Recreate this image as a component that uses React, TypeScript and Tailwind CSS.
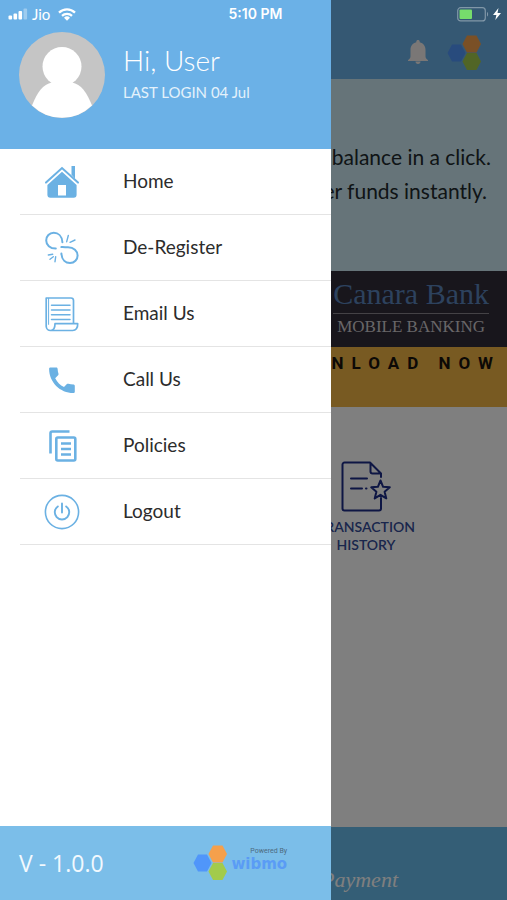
import type { ReactNode } from "react";

const MENU: { label: string; icon: ReactNode }[] = [
  { label: "Home", icon: <HomeIcon /> },
  { label: "De-Register", icon: <UnlinkIcon /> },
  { label: "Email Us", icon: <ScrollIcon /> },
  { label: "Call Us", icon: <PhoneIcon /> },
  { label: "Policies", icon: <PoliciesIcon /> },
  { label: "Logout", icon: <PowerIcon /> },
];

function HomeIcon() {
  return (
    <svg viewBox="0 0 36 36" className="size-9" fill="currentColor" aria-hidden>
      <path d="M27.500 2h3.500v12.700l-3.500-4V2z" />
      <path
        d="M2 18.600 18 4l16 14.600"
        fill="none"
        stroke="currentColor"
        strokeWidth="2"
        strokeLinecap="round"
      />
      <path
        fillRule="evenodd"
        d="M18 7.800 32.600 21v9.800a3 3 0 0 1-3 3H6.400a3 3 0 0 1-3-3V21L18 7.800zM14 21v10.500h8V21h-8z"
      />
    </svg>
  );
}

function UnlinkIcon() {
  return (
    <svg
      viewBox="0 0 36 36"
      className="size-9"
      fill="none"
      stroke="currentColor"
      strokeWidth="2"
      strokeLinecap="round"
      aria-hidden
    >
      <path d="M18.400 12.200C18 5.800 14 2.800 9.800 2.800 5.400 2.800 2.200 6.200 2.200 10.400c0 4.400 3.800 8.200 9.600 8.200" />
      <path d="M17.400 23.600C17.800 30 21.800 33 26 33c4.400 0 7.600-3.400 7.600-7.600 0-4.400-3.800-8.200-9.600-8.200-2.400 0-4.600-.2-6.600-.1" />
      <path
        d="M22.700 11.700l1.600-6.200M26 12.300l5-2.300M4.300 25l4.400-.7M6 29.300l3.300-2.600M11.700 26.700l-.7 5"
        strokeWidth="1.400"
      />
    </svg>
  );
}

function ScrollIcon() {
  return (
    <svg
      viewBox="0 0 36 36"
      className="size-9"
      fill="none"
      stroke="currentColor"
      strokeWidth="1.700"
      strokeLinejoin="round"
      strokeLinecap="round"
      aria-hidden
    >
      <path d="M29.500 27.700V4.500a2.500 2.500 0 0 0-2.500-2.500H2.200v28.500a4.300 4.300 0 0 0 4.300 4h22.200c3 0 5.200-2.600 5-6.800H11c0 3.800-1.400 6.800-4.500 6.800" />
      <path d="M4.600 2.400v26" strokeWidth="1" />
      <path d="M7.500 9.300h18.500M7.500 14h18.500M7.500 18.700h18.500M7.500 23.400h18.500" strokeWidth="1.500" />
    </svg>
  );
}

function PhoneIcon() {
  return (
    <svg viewBox="0 0 36 36" className="size-9" fill="currentColor" aria-hidden>
      <path d="M6.400 5.400h5.800c.8 0 1.300.5 1.400 1.300.1 1.900.4 3.500.9 5.100.2.600 0 1.100-.4 1.500l-2.900 2.900c2.100 4 4.800 6.800 8.800 8.800l2.900-2.900c.4-.4.900-.5 1.500-.4 1.600.5 3.200.8 5 .9.800 0 1.400.6 1.400 1.400v5.700c0 .8-.6 1.400-1.400 1.400C16 31.100 5.100 20.200 5.100 6.800c0-.8.5-1.400 1.300-1.400z" />
    </svg>
  );
}

function PoliciesIcon() {
  return (
    <svg
      viewBox="0 0 36 36"
      className="size-9"
      fill="none"
      stroke="currentColor"
      strokeWidth="2.600"
      aria-hidden
    >
      <path d="M6.500 25.500V5.300A1.800 1.800 0 0 1 8.300 3.500H25.500" />
      <rect x="12.300" y="9.500" width="19" height="23" rx="1.500" />
      <path d="M17 15.500h10M17 21h10M17 26.500h10" strokeWidth="2.400" />
    </svg>
  );
}

function PowerIcon() {
  return (
    <svg
      viewBox="0 0 36 36"
      className="size-9"
      fill="none"
      stroke="currentColor"
      strokeWidth="1.600"
      strokeLinecap="round"
      aria-hidden
    >
      <circle cx="18" cy="18" r="16.600" />
      <path d="M18 9.500v9M13.800 12.400a7.200 7.200 0 1 0 8.400 0" strokeWidth="1.900" />
    </svg>
  );
}

function HexLogo({ className }: { className: string }) {
  return (
    <svg viewBox="0 0 34 36" className={className} aria-hidden>
      <path d="M5 9.500h9l4.500 8.500-4.500 8.500H5L.5 18z" fill="#5096fa" />
      <path d="M20 .5h9.500L34 9l-4.500 8.500H20L15.500 9z" fill="#f5a04c" />
      <path d="M20 18h9.500l4.500 8.500-4.500 8.500H20l-4.500-8.500z" fill="#a2cb4c" />
    </svg>
  );
}

function StatusBar() {
  return (
    <div className="absolute inset-x-0 top-0 z-30 grid h-7 grid-cols-3 items-center px-2 text-white">
      <div className="flex items-center gap-1">
        <svg viewBox="0 0 19 12" className="h-3 w-5" fill="currentColor" aria-hidden>
          <rect x="0" y="7.500" width="3.600" height="4" rx="1" />
          <rect x="5" y="5.500" width="3.600" height="6" rx="1" />
          <rect x="10" y="3" width="3.600" height="8.500" rx="1" />
          <rect x="15" y="0.500" width="3.600" height="11" rx="1" opacity=".35" />
        </svg>
        <span className="text-[15px] leading-5">Jio</span>
        <svg
          viewBox="0 0 18 13"
          className="ml-1 h-[13px] w-[18px]"
          fill="none"
          stroke="currentColor"
          strokeWidth="2.300"
          aria-hidden
        >
          <path d="M1 4.600a11.600 11.600 0 0 1 16 0M4 7.900a7.300 7.300 0 0 1 10 0" />
          <path d="M9 12.800 6 9.700a4.400 4.400 0 0 1 6 0z" fill="currentColor" stroke="none" />
        </svg>
      </div>
      <div className="pl-1 text-center font-[Inter] text-[14px] leading-5 font-semibold">5:10 PM</div>
      <div className="flex items-center justify-end gap-1">
        <svg viewBox="0 0 32 15" className="h-[15px] w-8" aria-hidden>
          <rect
            x=".700"
            y=".700"
            width="27.600"
            height="13.200"
            rx="3"
            fill="none"
            stroke="#8197a8"
            strokeWidth="1.200"
          />
          <rect x="2.500" y="2.500" width="12.500" height="9.600" rx="1" fill="#76dc6c" />
          <path d="M30 5v4.600c1.500-.6 1.500-4 0-4.600z" fill="#8197a8" />
        </svg>
        <svg viewBox="0 0 8 12" className="-mr-0.5 h-3 w-2" fill="currentColor" aria-hidden>
          <path d="M5.500 0 0 7h3.400L2.300 12 8 5H4.500z" />
        </svg>
      </div>
    </div>
  );
}

function Dashboard() {
  return (
    <main className="flex min-h-screen flex-col overflow-hidden bg-white">
      <header className="flex h-[79px] items-end justify-end gap-[18px] bg-[#6bb1e7] pr-[26px] pb-2">
        <button type="button" aria-label="Notifications" className="pb-1.5 text-[#f5efec]">
          <svg viewBox="0 0 22 26" className="h-[26px] w-[22px]" fill="currentColor" aria-hidden>
            <path d="M11 1c1 0 1.700.7 1.700 1.700v.6c3.600.8 5.800 3.800 5.800 7.700v6.500c0 1.500 1 2.500 2.500 3.700V22H1v-.8c1.500-1.200 2.500-2.200 2.500-3.700V11c0-3.900 2.200-6.900 5.800-7.700v-.6C9.300 1.700 10 1 11 1zM8.500 22.500h5c0 1.500-1 2.500-2.500 2.500s-2.500-1-2.500-2.500z" />
          </svg>
        </button>
        <HexLogo className="h-9 w-[34px]" />
      </header>

      <section className="flex h-48 flex-col items-end bg-[#cce8f2] pt-[61px] pr-4 text-[21px] leading-[34px] whitespace-nowrap text-[#20282c]">
        <p>balance in a click.</p>
        <p className="pr-1">Transfer funds instantly.</p>
      </section>

      <section className="flex h-[76px] flex-col items-end bg-[#302c38] pt-1 pr-[18px] font-['Liberation_Serif',serif] whitespace-nowrap">
        <p className="border-b border-[#88848c] text-[30px] leading-[38px] text-[#5a84bc]">
          Canara Bank
        </p>
        <p className="pr-1 text-[17px] leading-[26px] text-[#d0ccd0]">MOBILE BANKING</p>
      </section>
      <section className="flex h-[60px] justify-end bg-[#f0b444] pt-1 pr-1.5 font-['Roboto',sans-serif] text-[17px] leading-6 font-bold tracking-[8px] whitespace-nowrap text-[#18120c]">
        <p>DOWNLOAD NOW</p>
      </section>

      <section className="flex grow items-start justify-end pt-[54px] pr-[92px]">
        <a
          href="#history"
          className="flex flex-col items-center text-center text-[14px] leading-[18px] font-semibold text-[#344c98]"
        >
          <svg
            viewBox="0 0 52 52"
            className="mb-[5px] size-[52px]"
            fill="none"
            stroke="#1c2c88"
            strokeWidth="2"
            strokeLinejoin="round"
            strokeLinecap="round"
            aria-hidden
          >
            <path d="M41 37v10.500a2 2 0 0 1-2 2H4.500a2 2 0 0 1-2-2v-44a2 2 0 0 1 2-2H30l11 11V16M30.500 2v8.500a2 2 0 0 0 2 2H41M11 17.500h16M11 27.500h11M26 27.500h.5" />
            <path d="m40.500 19.500 2.600 6.300 6.700.5-5.200 4.400 1.700 6.700-5.800-3.600-5.800 3.600 1.700-6.700-5.200-4.400 6.700-.5z" />
          </svg>
          <span>TRANSACTION</span>
          <span>HISTORY</span>
        </a>
      </section>

      <footer className="flex h-[73px] items-end justify-end bg-[#68bcec] pr-[109px] pb-1 font-['Liberation_Serif',serif] text-[22px] leading-8 text-white italic">
        Payment
      </footer>
    </main>
  );
}

function Drawer() {
  return (
    <aside className="absolute inset-y-0 left-0 z-20 flex w-[65.3%] flex-col bg-white">
      <div className="flex h-[149px] items-start gap-[18px] bg-[#6bb1e7] pt-8 pl-[19px] text-white">
        <svg
          viewBox="0 0 86 86"
          className="size-[86px] shrink-0"
          role="img"
          aria-label="Profile picture"
        >
          <circle cx="43" cy="43" r="43" fill="#c5c5c5" />
          <circle cx="43" cy="34.500" r="19.500" fill="#fff" />
          <path
            d="M13 73.600C18 60.500 24 52 33 50.500h20C62 52 68 60.500 73 73.600a43 43 0 0 1-60 0z"
            fill="#fff"
          />
        </svg>
        <div className="pt-3">
          <h1 className="text-[28px] leading-8 font-light">Hi, User</h1>
          <p className="pt-1 text-[15px] leading-6 text-[#e4f1fb]">LAST LOGIN 04 Jul</p>
        </div>
      </div>

      <nav className="pl-5">
        <ul>
          {MENU.map((item) => (
            <li key={item.label} className="border-b border-[#e4e4e4]">
              <button
                type="button"
                className="flex h-[65px] w-full items-center gap-[43px] pl-6 text-left"
              >
                <span className="text-[#6bb1e3]">{item.icon}</span>
                <span className="pb-0.5 text-[19px] leading-6 text-[#2c2c2c]">{item.label}</span>
              </button>
            </li>
          ))}
        </ul>
      </nav>

      <div className="mt-auto flex h-[74px] items-center justify-between bg-[#7bbee9] pr-11 pl-[19px]">
        <span className="font-['Open_Sans',sans-serif] text-[23px] leading-8 text-[#f2f9fe]">
          V - 1.0.0
        </span>
        <div className="flex items-center gap-1">
          <HexLogo className="h-9 w-[34px]" />
          <div className="flex flex-col items-end pb-2">
            <span className="font-['Roboto',sans-serif] text-[7px] leading-[10px] text-[#4d6a80]">
              Powered By
            </span>
            <span className="font-['DejaVu_Sans',sans-serif] text-[15px] leading-4 font-bold text-[#5a9cf5]">
              wibmo
            </span>
          </div>
        </div>
      </div>
    </aside>
  );
}

export default function App() {
  return (
    <div className="relative min-h-screen font-['Lato',sans-serif]">
      <Dashboard />
      <div className="absolute inset-0 z-10 bg-black/50" />
      <Drawer />
      <StatusBar />
    </div>
  );
}
